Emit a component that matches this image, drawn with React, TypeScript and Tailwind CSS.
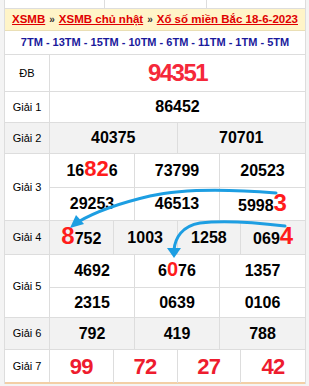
import React from "react";

const font = { fontFamily: '"Liberation Sans", Arial, sans-serif' };

function Label({ text }: { text: string }) {
  return (
    <div className="flex w-[45px] shrink-0 items-center justify-center border-r border-[#dddddd] text-[11px] text-black">
      {text}
    </div>
  );
}

function Cells({ items, cols, h }: { items: React.ReactNode[]; cols: 2 | 3 | 4; h: string }) {
  const grid = cols === 2 ? "grid-cols-2" : cols === 3 ? "grid-cols-3" : "grid-cols-4";
  return (
    <div className={`grid ${grid} ${h} divide-x divide-[#dddddd]`}>
      {items.map((it, i) => (
        <div key={i} className="flex items-center justify-center text-[16px] font-bold text-black">
          {it}
        </div>
      ))}
    </div>
  );
}

const R = ({ children, size = "text-[24px]" }: { children: React.ReactNode; size?: string }) => (
  <span className={`${size} font-bold leading-none text-[#ff1c1c]`}>{children}</span>
);

export default function App() {
  return (
    <div className="relative h-[386px] w-[309px] overflow-hidden bg-[#f4f4f4]" style={font}>
      <div className="ml-[4px] w-[302px] border-x border-[#dddddd] bg-white">
        {/* partial row above */}
        <div className="grid h-[9px] grid-cols-[100px_102px_1fr] divide-x divide-[#dddddd] border-b border-[#dddddd]">
          <div />
          <div />
          <div />
        </div>

        {/* title */}
        <div className="flex h-[22px] items-center justify-center border-b border-[#eadfb5] bg-[#fff4c8] text-[11.5px] font-bold text-[#e00000]">
          <a className="underline">XSMB</a>
          <span className="mx-[4px] text-[10px] text-[#333333]">»</span>
          <a className="underline">XSMB chủ nhật</a>
          <span className="mx-[4px] text-[10px] text-[#333333]">»</span>
          <a className="underline">Xổ số miền Bắc 18-6-2023</a>
        </div>

        {/* subtitle */}
        <div className="flex h-[24px] items-center justify-center border-b border-[#dddddd] text-[11px] font-bold text-[#1a1a9c]">
          7TM - 13TM - 15TM - 10TM - 6TM - 11TM - 1TM - 5TM
        </div>

        {/* ĐB */}
        <div className="flex h-[37px] border-b border-[#dddddd]">
          <Label text="ĐB" />
          <div className="flex flex-1 items-center justify-center text-[24px] font-semibold tracking-[-1.5px] text-[#f5283a]">94351</div>
        </div>

        {/* Giải 1 */}
        <div className="flex h-[31px] border-b border-[#dddddd]">
          <Label text="Giải 1" />
          <div className="flex flex-1 items-center justify-center text-[16px] font-bold text-black">86452</div>
        </div>

        {/* Giải 2 */}
        <div className="flex h-[31px] border-b border-[#dddddd] bg-[#f2f2f2]">
          <Label text="Giải 2" />
          <div className="flex-1">
            <Cells cols={2} h="h-full" items={["40375", "70701"]} />
          </div>
        </div>

        {/* Giải 3 */}
        <div className="flex h-[67px] border-b border-[#dddddd]">
          <Label text="Giải 3" />
          <div className="flex flex-1 flex-col">
            <div className="border-b border-[#dddddd]">
              <Cells
                cols={3}
                h="h-[33px]"
                items={[
                  <span className="flex items-baseline">16<R size="text-[22px]">82</R>6</span>,
                  "73799",
                  "20523",
                ]}
              />
            </div>
            <Cells
              cols={3}
              h="h-[33px]"
              items={["29253", "46513", <span className="flex items-baseline">5998<R>3</R></span>]}
            />
          </div>
        </div>

        {/* Giải 4 */}
        <div className="flex h-[34px] border-b border-[#dddddd] bg-[#f2f2f2]">
          <Label text="Giải 4" />
          <div className="flex-1">
            <Cells
              cols={4}
              h="h-full"
              items={[
                <span className="flex items-baseline"><R>8</R>752</span>,
                "1003",
                "1258",
                <span className="flex items-baseline">069<R>4</R></span>,
              ]}
            />
          </div>
        </div>

        {/* Giải 5 */}
        <div className="flex h-[63px] border-b border-[#dddddd]">
          <Label text="Giải 5" />
          <div className="flex flex-1 flex-col">
            <div className="border-b border-[#dddddd]">
              <Cells
                cols={3}
                h="h-[32px]"
                items={["4692", <span className="flex items-baseline">6<R size="text-[20px]">0</R>76</span>, "1357"]}
              />
            </div>
            <Cells cols={3} h="h-[30px]" items={["2315", "0639", "0106"]} />
          </div>
        </div>

        {/* Giải 6 */}
        <div className="flex h-[32px] border-b border-[#dddddd] bg-[#f2f2f2]">
          <Label text="Giải 6" />
          <div className="flex-1">
            <Cells cols={3} h="h-full" items={["792", "419", "788"]} />
          </div>
        </div>

        {/* Giải 7 */}
        <div className="flex h-[34px] border-b-2 border-[#f3cfa6]">
          <Label text="Giải 7" />
          <div className="grid flex-1 grid-cols-4 divide-x divide-[#dddddd]">
            {["99", "72", "27", "42"].map((n) => (
              <div key={n} className="flex items-center justify-center text-[22px] font-bold tracking-[-0.5px] text-[#ee1c2e]">
                {n}
              </div>
            ))}
          </div>
        </div>
      </div>

      {/* arrows */}
      <svg className="pointer-events-none absolute left-0 top-0" width="309" height="386" viewBox="0 0 309 386">
        <path
          d="M276 193 C 240 190, 190 187, 150 196 C 120 203, 95 212, 78 222"
          fill="none"
          stroke="#1d9ee2"
          strokeWidth="3"
          strokeLinecap="round"
        />
        <polygon points="70,228 76,215 84,224" fill="#1d9ee2" />
        <path
          d="M285 226 C 260 223, 225 220, 200 223 C 182 226, 175 238, 174 250"
          fill="none"
          stroke="#1d9ee2"
          strokeWidth="3"
          strokeLinecap="round"
        />
        <polygon points="174,258 167,248 181,248" fill="#1d9ee2" />
      </svg>
    </div>
  );
}
